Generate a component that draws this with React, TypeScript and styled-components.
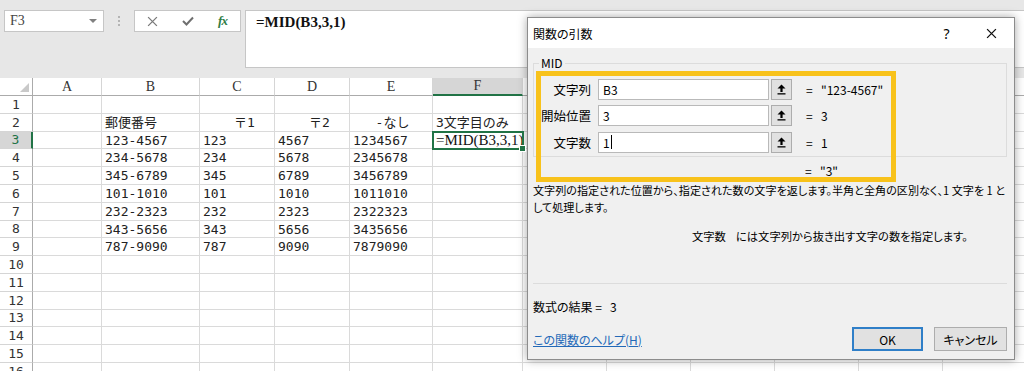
import React from 'react'
import styled, { createGlobalStyle } from 'styled-components'

const GlobalStyle = createGlobalStyle`
	html, body {
		margin: 0;
		padding: 0;
		background: #fff;
	}
	* {
		box-sizing: border-box;
	}
`

const Screen = styled.div`
	position: relative;
	width: 1024px;
	height: 371px;
	overflow: hidden;
	background: #fff;
	font-family: 'Noto Sans CJK JP', sans-serif;
`

/* ---------- formula bar ---------- */

const TopBar = styled.div`
	height: 78px;
	padding: 10px 0 0 4px;
	background: #e7e7e7;
	display: flex;
	align-items: flex-start;
`

const NameBox = styled.div`
	width: 100px;
	height: 22px;
	border: 1px solid #c6c6c6;
	background: #fff;
	display: flex;
	align-items: center;
	justify-content: space-between;
	padding: 0 6px 0 5px;
	font: 14px 'Liberation Serif', serif;
	color: #444;
`

const Caret = styled.span`
	width: 0;
	height: 0;
	border-left: 4px solid transparent;
	border-right: 4px solid transparent;
	border-top: 4px solid #808080;
`

const Grip = styled.div`
	width: 30px;
	height: 22px;
	display: flex;
	flex-direction: column;
	align-items: center;
	justify-content: center;
	gap: 2px;
`

const GripDot = styled.span`
	width: 2px;
	height: 2px;
	background: #b4b4b4;
`

const EditButtons = styled.div`
	width: 107px;
	height: 22px;
	border: 1px solid #c6c6c6;
	background: #fff;
	display: grid;
	grid-template-columns: repeat(3, 35px);
	align-items: center;
	justify-items: center;
`

const Fx = styled.span`
	font: italic bold 13px 'Liberation Serif', serif;
	color: #2f7d46;
	letter-spacing: -1px;
`

const FormulaInput = styled.div`
	flex: 1;
	margin-left: 4px;
	height: 58px;
	border: 1px solid #c6c6c6;
	border-right: none;
	background: #fff;
	padding: 0 0 0 10px;
	font: bold 15px 'Liberation Serif', serif;
	line-height: 22px;
	color: #111;
`

/* ---------- sheet ---------- */

const Sheet = styled.div`
	display: grid;
	grid-template-columns: 33px 69px 98px 75px 75px 83px 90px repeat(6, 84px);
	grid-template-rows: 18px repeat(16, 17.8px);
	background: #fff;
`

const Corner = styled.div`
	position: relative;
	border-right: 1px solid #ababab;
	border-bottom: 1px solid #ababab;
	&::after {
		content: '';
		position: absolute;
		right: 3px;
		bottom: 3px;
		border-left: 9px solid transparent;
		border-bottom: 9px solid #c9c9c9;
	}
`

const ColHead = styled.div<{ $active?: boolean }>`
	border-right: 1px solid #d5d5d5;
	border-bottom: ${(p) => (p.$active ? '2px solid #217346' : '1px solid #ababab')};
	background: ${(p) => (p.$active ? '#d6d6d6' : '#fff')};
	font: 14px 'Liberation Serif', serif;
	color: #333;
	display: flex;
	align-items: center;
	justify-content: center;
`

const RowHead = styled.div<{ $active?: boolean }>`
	border-bottom: 1px solid #d5d5d5;
	border-right: ${(p) => (p.$active ? '2px solid #217346' : '1px solid #ababab')};
	background: ${(p) => (p.$active ? '#d6d6d6' : '#fff')};
	font: 13px 'DejaVu Sans Mono', monospace;
	color: ${(p) => (p.$active ? '#217346' : '#333')};
	display: flex;
	align-items: center;
	justify-content: center;
`

const Cell = styled.div<{ $center?: boolean; $nudge?: number; $selected?: boolean }>`
	position: relative;
	border-right: 1px solid #dadada;
	border-bottom: 1px solid #dadada;
	padding: 0 0 0 ${(p) => 3 + (p.$nudge || 0)}px;
	text-align: ${(p) => (p.$center ? 'center' : 'left')};
	white-space: nowrap;
	font: 13px 'DejaVu Sans Mono', 'Noto Sans CJK JP', monospace;
	line-height: 17px;
	color: #222;
	${(p) =>
		p.$selected &&
		`
		z-index: 2;
		outline: 2px solid #217346;
		outline-offset: -1px;
		font: 15px 'Liberation Serif', serif;
		line-height: 17px;
		color: #111;
		&::after {
			content: '';
			position: absolute;
			right: -4px;
			bottom: -4px;
			width: 5px;
			height: 5px;
			background: #217346;
			border: 1px solid #fff;
		}
	`}
`

/* ---------- dialog ---------- */

const Dialog = styled.div`
	position: absolute;
	left: 527px;
	top: 17px;
	width: 488px;
	height: 343px;
	border: 1px solid #8c8c8c;
	background: #f0f0f0;
	box-shadow: 0 0 9px rgba(0, 0, 0, 0.35);
	display: flex;
	flex-direction: column;
	font: 12px 'Noto Sans CJK JP', sans-serif;
	font-feature-settings: 'palt';
	color: #000;
`

const TitleBar = styled.div`
	height: 30px;
	flex: none;
	background: #fff;
	display: flex;
	align-items: center;
	padding-left: 5px;
`

const TitleText = styled.span`
	flex: 1;
	font-size: 12px;
`

const TitleButton = styled.div`
	width: 45px;
	height: 30px;
	display: flex;
	align-items: center;
	justify-content: center;
	font: 14px 'Noto Sans', sans-serif;
`

const Body = styled.div`
	flex: 1;
	display: flex;
	flex-direction: column;
	padding: 0 7px 0 5px;
`

const GroupBox = styled.fieldset`
	margin: 7px 0 0;
	padding: 7px 0 3px;
	border: 1px solid #dcdcdc;
	min-width: 0;
	display: flex;
	flex-direction: column;
	gap: 4.5px;
`

const Legend = styled.legend`
	margin-left: 5px;
	padding: 0 2px;
	font-size: 12px;
	line-height: 16px;
`

const FieldRow = styled.div`
	height: 22px;
	display: flex;
	align-items: center;
`

const FieldLabel = styled.span`
	width: 57px;
	text-align: right;
	font-size: 12.5px;
`

const FieldInput = styled.div`
	margin-left: 7px;
	width: 171px;
	height: 21px;
	border: 1px solid #b9b9b9;
	background: #fff;
	padding-left: 4px;
	display: flex;
	align-items: center;
	font-size: 12px;
`

const TextCursor = styled.span`
	width: 1px;
	height: 14px;
	margin-left: 1px;
	background: #000;
`

const RefButton = styled.div`
	margin-left: 2px;
	width: 21px;
	height: 21px;
	border: 1px solid #adadad;
	background: #e1e1e1;
	display: flex;
	align-items: center;
	justify-content: center;
`

const Equals = styled.span<{ $flush?: boolean }>`
	margin-left: ${(p) => (p.$flush ? 0 : 14)}px;
	width: 15px;
`

const Value = styled.span`
	font-size: 12px;
`

const ResultRow = styled.div`
	margin-top: 3px;
	height: 20px;
	padding-left: 272px;
	display: flex;
	align-items: center;
`

const Description = styled.div`
	margin-top: 2px;
	line-height: 17px;
	white-space: nowrap;
	font-size: 11.1px;
`

const ArgHelp = styled.div`
	margin-top: 12px;
	padding-left: 159px;
	line-height: 17px;
	display: flex;
	gap: 10px;
	font-size: 11.3px;
`

const Separator = styled.div`
	margin-top: 38px;
	height: 1px;
	background: #dcdcdc;
`

const FormulaResult = styled.div`
	margin-top: 14px;
	line-height: 17px;
	font-size: 12px;
	display: flex;
`

const Footer = styled.div`
	margin-top: 12px;
	display: flex;
	align-items: center;
	gap: 11px;
`

const HelpLink = styled.a`
	flex: 1;
	color: #2369b8;
	text-decoration: underline;
	font-size: 12px;
`

const Button = styled.div<{ $primary?: boolean }>`
	width: ${(p) => (p.$primary ? 71 : 73)}px;
	height: 24px;
	border: ${(p) => (p.$primary ? '2px solid #2f7fc8' : '1px solid #adadad')};
	background: #e1e1e1;
	display: flex;
	align-items: center;
	justify-content: center;
	font-size: 12px;
`

const Highlight = styled.div`
	position: absolute;
	left: 8px;
	top: 53px;
	width: 360px;
	height: 111px;
	border: 5px solid #f8c21b;
	pointer-events: none;
`

/* ---------- icons ---------- */

const CrossIcon = ({ color, size }: { color: string; size: number }) => (
	<svg width={size} height={size} viewBox="0 0 10 10">
		<path d="M1 1 L9 9 M9 1 L1 9" stroke={color} strokeWidth="1.2" fill="none" />
	</svg>
)

const CheckIcon = () => (
	<svg width="12" height="10" viewBox="0 0 12 10">
		<path d="M1 5 L4.5 8.5 L11 1.5" stroke="#6f6f6f" strokeWidth="2" fill="none" />
	</svg>
)

const CollapseIcon = () => (
	<svg width="9" height="11" viewBox="0 0 9 11">
		<path d="M4.5 0.5 L8.5 4.5 H5.6 V8 H3.4 V4.5 H0.5 Z" fill="#000" />
		<rect x="0.5" y="9.2" width="8" height="1.3" fill="#000" />
	</svg>
)

/* ---------- data ---------- */

const columns = ['A', 'B', 'C', 'D', 'E', 'F', 'G', 'H', 'I', 'J', 'K', 'L']

type CellData = { text: string; center?: boolean; nudge?: number; selected?: boolean }

const data: Record<number, (CellData | string)[]> = {
	2: ['', '郵便番号', { text: '〒1', center: true, nudge: 12 }, { text: '〒2', center: true, nudge: 12 }, { text: '-なし', center: true }, '3文字目のみ'],
	3: ['', '123-4567', '123', '4567', '1234567', { text: '=MID(B3,3,1)', selected: true }],
	4: ['', '234-5678', '234', '5678', '2345678'],
	5: ['', '345-6789', '345', '6789', '3456789'],
	6: ['', '101-1010', '101', '1010', '1011010'],
	7: ['', '232-2323', '232', '2323', '2322323'],
	8: ['', '343-5656', '343', '5656', '3435656'],
	9: ['', '787-9090', '787', '9090', '7879090'],
}

const args = [
	{ label: '文字列', input: 'B3', value: '"123-4567"' },
	{ label: '開始位置', input: '3', value: '3' },
	{ label: '文字数', input: '1', value: '1', focused: true },
]

const App: React.FC = () => {
	const rows = Array.from({ length: 16 }, (_, i) => i + 1)

	return (
		<Screen>
			<GlobalStyle />
			<TopBar>
				<NameBox>
					F3
					<Caret />
				</NameBox>
				<Grip>
					<GripDot />
					<GripDot />
					<GripDot />
				</Grip>
				<EditButtons>
					<CrossIcon color="#7a7a7a" size={11} />
					<CheckIcon />
					<Fx>fx</Fx>
				</EditButtons>
				<FormulaInput>=MID(B3,3,1)</FormulaInput>
			</TopBar>

			<Sheet>
				<Corner />
				{columns.map((c) => (
					<ColHead key={c} $active={c === 'F'}>
						{c}
					</ColHead>
				))}
				{rows.map((r) => (
					<React.Fragment key={r}>
						<RowHead $active={r === 3}>{r}</RowHead>
						{columns.map((c, ci) => {
							const raw = data[r]?.[ci]
							const cell: CellData = typeof raw === 'string' ? { text: raw } : raw || { text: '' }
							return (
								<Cell key={c} $center={cell.center} $nudge={cell.nudge} $selected={cell.selected}>
									{cell.text}
								</Cell>
							)
						})}
					</React.Fragment>
				))}
			</Sheet>

			<Dialog>
				<TitleBar>
					<TitleText>関数の引数</TitleText>
					<TitleButton>?</TitleButton>
					<TitleButton>
						<CrossIcon color="#111" size={11} />
					</TitleButton>
				</TitleBar>
				<Body>
					<GroupBox>
						<Legend>MID</Legend>
						{args.map((a) => (
							<FieldRow key={a.label}>
								<FieldLabel>{a.label}</FieldLabel>
								<FieldInput>
									{a.input}
									{a.focused && <TextCursor />}
								</FieldInput>
								<RefButton>
									<CollapseIcon />
								</RefButton>
								<Equals>=</Equals>
								<Value>{a.value}</Value>
							</FieldRow>
						))}
					</GroupBox>
					<ResultRow>
						<Equals $flush>=</Equals>
						<Value>"3"</Value>
					</ResultRow>
					<Description>
						文字列の指定された位置から、指定された数の文字を返します。半角と全角の区別なく、1 文字を 1 と
						<br />
						して処理します。
					</Description>
					<ArgHelp>
						<span>文字数</span>
						<span>には文字列から抜き出す文字の数を指定します。</span>
					</ArgHelp>
					<Separator />
					<FormulaResult>
						<span>数式の結果 =&nbsp;&nbsp;&nbsp;3</span>
					</FormulaResult>
					<Footer>
						<HelpLink>この関数のヘルプ(H)</HelpLink>
						<Button $primary>OK</Button>
						<Button>キャンセル</Button>
					</Footer>
				</Body>
				<Highlight />
			</Dialog>
		</Screen>
	)
}

export default App
